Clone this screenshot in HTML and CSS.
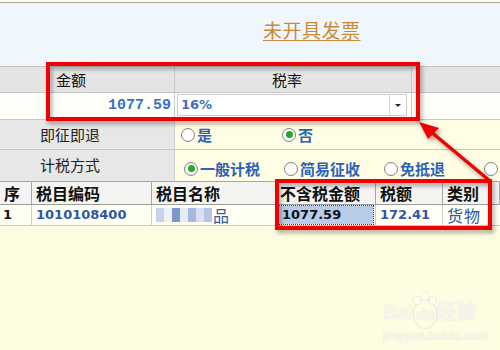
FILE: index.html
```html
<!DOCTYPE html>
<html lang="zh-CN">
<head>
    <meta charset="UTF-8">
    <meta name="viewport" content="width=device-width, initial-scale=1.0">
    <title>未开具发票</title>
    <link rel="stylesheet" href="styles.css">
</head>
<body>
    <div class="page">
        <div class="top">
            <a class="title" href="#">未开具发票</a>
        </div>

        <div class="amount">
            <div class="amount-head">
                <div class="cell lbl-amount">金额</div>
                <div class="cell lbl-rate">税率</div>
                <div class="cell"></div>
            </div>
            <div class="amount-row">
                <div class="cell num">1077.59</div>
                <div class="cell">
                    <div class="select">
                        <span class="select-val">16%</span>
                        <span class="select-btn"><span class="caret"></span></span>
                    </div>
                </div>
                <div class="cell"></div>
            </div>
        </div>

        <div class="form-row first">
            <div class="form-label">即征即退</div>
            <div class="form-value">
                <label class="radio"><span class="dot"></span>是</label>
                <label class="radio"><span class="dot on"></span>否</label>
            </div>
        </div>
        <div class="form-row second">
            <div class="form-label">计税方式</div>
            <div class="form-value low">
                <label class="radio"><span class="dot on"></span>一般计税</label>
                <label class="radio"><span class="dot"></span>简易征收</label>
                <label class="radio"><span class="dot"></span>免抵退</label>
                <label class="radio"><span class="dot"></span></label>
            </div>
        </div>

        <div class="grid">
            <div class="gh">序</div>
            <div class="gh">税目编码</div>
            <div class="gh">税目名称</div>
            <div class="gh">不含税金额</div>
            <div class="gh">税额</div>
            <div class="gh">类别</div>
            <div class="gh"></div>

            <div class="gd seq">1</div>
            <div class="gd code">1010108400</div>
            <div class="gd name">
                <span class="blur">
                    <i class="b1"></i><i class="b2"></i><i class="b3"></i><i class="b4"></i><i class="b5"></i><i class="b6"></i><i class="b7"></i>
                </span>品
            </div>
            <div class="gd"><span class="selected">1077.59</span></div>
            <div class="gd code">172.41</div>
            <div class="gd kind">货物</div>
            <div class="gd"></div>
        </div>

        <svg class="marks" width="500" height="350" viewBox="0 0 500 350">
            <rect x="48" y="64" width="370" height="55" />
            <rect x="277" y="181" width="213" height="47" />
            <line x1="490" y1="181" x2="430" y2="131" />
            <polygon points="419,122 439,128 428,139" />
        </svg>

        <div class="watermark">
            <div class="wm-logo">Bai<span class="paw">du<i class="toe t1"></i><i class="toe t2"></i><i class="toe t3"></i></span>经验</div>
            <div class="wm-url">jingyan.baidu.com</div>
        </div>
    </div>
</body>
</html>
```

FILE: styles.css
```css
body {
    margin: 0;
    font-family: "Noto Sans CJK SC", "DejaVu Sans", sans-serif;
    font-size: 15px;
    color: #111;
    background: #fffde1;
}
.page {
    position: relative;
    width: 500px;
    height: 350px;
    overflow: hidden;
    background: #fffde1;
}
.top {
    margin-top: 2px;
    height: 64px;
    box-sizing: border-box;
    border-top: 1px solid #a9a9a9;
    background: #eff6fc;
    padding: 14px 0 0 263px;
}
.title {
    color: #c98a35;
    font-size: 19px;
    line-height: 26px;
    letter-spacing: 0.5px;
    text-decoration: underline;
    text-underline-offset: 2px;
}
.amount-head,
.amount-row {
    display: grid;
    grid-template-columns: 175px 237px 1fr;
    box-sizing: border-box;
}
.amount-head {
    height: 27px;
    background: #e4e4e4;
    border-top: 1px solid #c2c2c2;
    border-bottom: 1px solid #c6c6c6;
}
.amount-row {
    height: 27px;
    background: #fffffa;
    border-bottom: 1px solid #c6c6c6;
}
.cell {
    border-right: 1px solid #c8c8c8;
    line-height: 25px;
}
.cell:last-child {
    border-right: none;
}
.lbl-amount {
    padding-left: 56px;
}
.lbl-rate {
    text-align: center;
    padding-right: 12px;
}
.num {
    text-align: right;
    padding-right: 3px;
    font-family: "Liberation Mono", monospace;
    font-weight: bold;
    font-size: 15px;
    color: #3b6fc2;
}
.select {
    display: flex;
    height: 22px;
    margin: 1px 4px 0 2px;
    box-sizing: border-box;
    border: 1px solid #cdcdcd;
    background: #fff;
}
.select-val {
    flex: 1;
    padding-left: 3px;
    line-height: 20px;
    font-family: "DejaVu Sans", sans-serif;
    font-weight: bold;
    font-size: 13px;
    color: #3b6fc2;
}
.select-btn {
    width: 16px;
    border-left: 1px solid #d4d4d4;
    display: flex;
    align-items: center;
    justify-content: center;
}
.caret {
    width: 0;
    height: 0;
    border-left: 3px solid transparent;
    border-right: 3px solid transparent;
    border-top: 3px solid #222;
}
.form-row {
    display: grid;
    grid-template-columns: 175px 1fr;
    box-sizing: border-box;
    border-bottom: 1px solid #c9c9c9;
}
.form-row.first {
    height: 30px;
}
.form-row.second {
    height: 31px;
    border-bottom: none;
}
.form-label {
    background: #e7e7e7;
    border-right: 1px solid #d0d0d0;
    padding-left: 40px;
    line-height: 29px;
    color: #222;
}
.form-value {
    background: #fffde3;
    display: flex;
    align-items: center;
    padding-left: 6px;
}
.form-value.low {
    padding: 6px 0 0 9px;
}
.radio {
    display: flex;
    align-items: center;
    width: 101px;
    flex-shrink: 0;
    color: #2d62b8;
    font-weight: bold;
    font-size: 15px;
}
.form-value.low .radio {
    width: 100px;
}
.dot {
    width: 14px;
    height: 14px;
    box-sizing: border-box;
    border-radius: 50%;
    border: 1px solid #858585;
    background: radial-gradient(circle, #fff 55%, #e3e3e3);
    margin-right: 2px;
    display: flex;
    align-items: center;
    justify-content: center;
}
.dot.on::after {
    content: "";
    width: 7px;
    height: 7px;
    border-radius: 50%;
    background: #2ba52b;
}
.grid {
    display: grid;
    grid-template-columns: 32px 120px 124px 100px 67px 48px 1fr;
    border-top: 1px solid #a6a6a6;
}
.gh {
    height: 22px;
    background: #f4f4f2;
    border-right: 1px solid #a8a8a8;
    border-bottom: 1px solid #9c9c9c;
    padding-left: 4px;
    font-weight: bold;
    font-size: 16px;
    line-height: 22px;
}
.gd {
    height: 20px;
    background: #fffff4;
    border-right: 1px solid #cfcfcf;
    border-bottom: 1px solid #c8c8c8;
    padding-left: 4px;
    line-height: 20px;
    font-family: "DejaVu Sans", sans-serif;
    font-weight: bold;
    font-size: 13px;
}
.gh:last-child,
.gd:last-child {
    border-right: none;
}
.seq {
    padding-left: 3px;
}
.code {
    color: #2f56a8;
}
.kind {
    color: #2f56a8;
    font-family: "Noto Sans CJK SC", sans-serif;
    font-weight: normal;
    font-size: 16px;
    letter-spacing: 1px;
}
.name {
    display: flex;
    align-items: center;
    color: #3a5aa0;
    font-family: "Noto Sans CJK SC", sans-serif;
    font-weight: normal;
    font-size: 16px;
}
.blur {
    display: flex;
    width: 56px;
    height: 14px;
    margin-right: 1px;
}
.blur i {
    display: block;
    width: 8px;
    height: 14px;
}
.b1 { background: #c5d3ec; }
.b2 { background: #eef2f8; }
.b3 { background: #7d97cc; }
.b4 { background: #e6ebf4; }
.b5 { background: #a7b9de; }
.b6 { background: #d9e1f0; }
.b7 { background: #b7c6e4; }
.selected {
    display: block;
    margin: 1px 2px 0 -2px;
    padding-left: 4px;
    height: 18px;
    line-height: 18px;
    background: #b8cbe8;
    outline: 1px dotted #333;
    color: #111;
}
.marks {
    position: absolute;
    left: 0;
    top: 0;
    filter: drop-shadow(2px 3px 2px rgba(0, 0, 0, 0.35));
}
.marks rect {
    fill: none;
    stroke: #f00000;
    stroke-width: 4;
}
.marks line {
    stroke: #f00000;
    stroke-width: 3.5;
}
.marks polygon {
    fill: #f00000;
}
.watermark {
    position: absolute;
    left: 383px;
    top: 298px;
    color: rgba(255, 255, 255, 0.8);
    text-shadow: 0 0 1px rgba(120, 120, 100, 0.3);
    font-family: "Liberation Sans", sans-serif;
    font-weight: bold;
}
.wm-logo {
    font-size: 20px;
    line-height: 28px;
}
.paw {
    position: relative;
    display: inline-block;
    font-size: 15px;
    padding: 0 2px;
    border-radius: 50%;
    box-shadow: 0 0 0 1px rgba(200, 200, 180, 0.3);
}
.toe {
    position: absolute;
    top: -6px;
    width: 6px;
    height: 7px;
    border-radius: 50%;
    background: rgba(255, 255, 255, 0.8);
    box-shadow: 0 0 0 1px rgba(200, 200, 180, 0.3);
}
.t1 { left: 0; top: -3px; }
.t2 { left: 8px; top: -7px; }
.t3 { left: 16px; top: -3px; }
.wm-url {
    font-size: 12px;
    line-height: 14px;
    margin-top: 1px;
}
```
